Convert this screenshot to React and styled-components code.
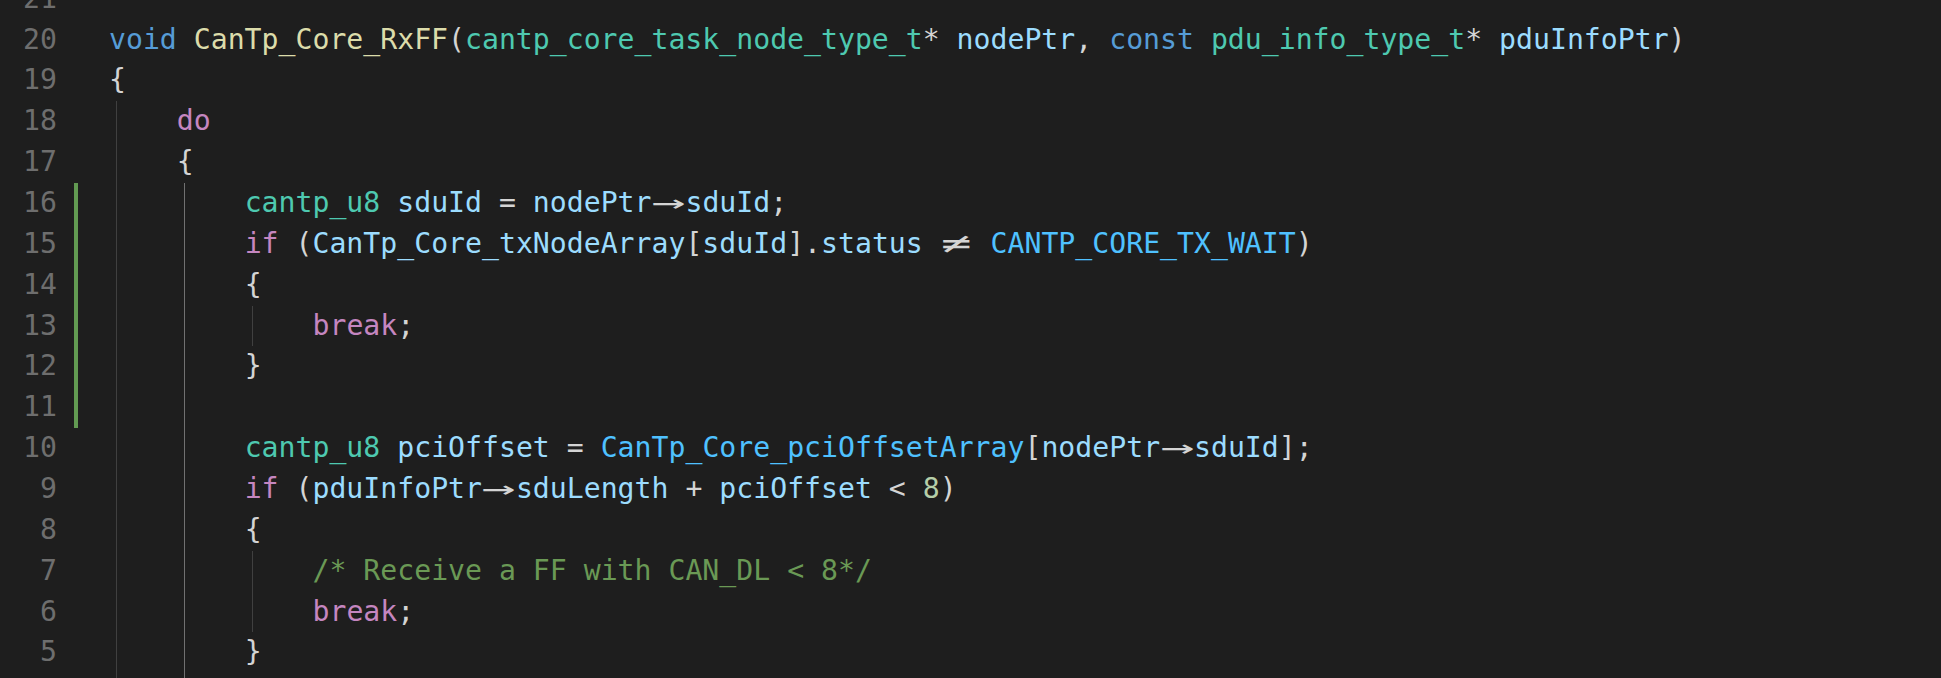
import React from "react";
import styled, { createGlobalStyle } from "styled-components";

const CW = 16.96; // character advance
const LH = 40.86; // line height

const Global = createGlobalStyle`
  html, body { margin: 0; padding: 0; background: #1e1e1e; }
  body { overflow: hidden; }
`;

const Editor = styled.div`
  width: 100vw;
  height: 100vh;
  overflow: hidden;
  background: #1e1e1e;
  font-family: "DejaVu Sans Mono", "Liberation Mono", monospace;
  font-size: 28.17px;
  color: #d4d4d4;
`;

const Lines = styled.div`
  margin-top: -21.3px;
  display: flex;
  flex-direction: column;
`;

const Line = styled.div`
  display: flex;
  height: ${LH}px;
  line-height: ${LH}px;
  white-space: pre;
`;

const LineNo = styled.div`
  width: 57px;
  flex: none;
  text-align: right;
  color: #6e6e6e;
`;

const Gutter = styled.div`
  width: 52px;
  flex: none;
  display: flex;
`;

const GitBar = styled.div`
  margin-left: 17px;
  width: 4px;
  background: ${(p) => (p.$on ? "#629a52" : "transparent")};
`;

const Code = styled.div`
  display: flex;
  flex: 1;
`;

const Indent = styled.div`
  flex: none;
  margin-left: 7px;
  width: ${4 * CW - 8}px;
  border-left: 1px solid ${(p) => (p.$active ? "#717171" : "#404040")};
`;

const Text = styled.span`
  white-space: pre;
`;

const palette = {
  kw: "#569cd6",
  ctrl: "#c586c0",
  fn: "#dcdcaa",
  type: "#4ec9b0",
  var: "#9cdcfe",
  glob: "#4fc1ff",
  num: "#b5cea8",
  com: "#6a9955",
  p: "#d4d4d4",
};

const Tok = styled.span`
  color: ${(p) => palette[p.$k] || palette.p};
`;

const Lig = styled.span`
  display: inline-block;
  width: ${2 * CW}px;
  text-align: center;
  color: #d4d4d4;
`;

const LigGlyph = styled.span`
  display: inline-block;
  transform: scaleX(${(p) => p.$sx});
`;

const arrow = (
  <Lig>
    <LigGlyph $sx={2}>→</LigGlyph>
  </Lig>
);
const neq = (
  <Lig>
    <LigGlyph $sx={1.8}>≠</LigGlyph>
  </Lig>
);

const T = (k, s) => <Tok $k={k}>{s}</Tok>;

const lines = [
  { n: 21, lvl: 0, c: null },
  {
    n: 20,
    lvl: 0,
    c: (
      <>
        {T("kw", "void")} {T("fn", "CanTp_Core_RxFF")}({T("type", "cantp_core_task_node_type_t")}* {T("var", "nodePtr")}, {T("kw", "const")} {T("type", "pdu_info_type_t")}* {T("var", "pduInfoPtr")})
      </>
    ),
  },
  { n: 19, lvl: 0, c: "{" },
  { n: 18, lvl: 1, c: T("ctrl", "do") },
  { n: 17, lvl: 1, c: "{" },
  {
    n: 16,
    lvl: 2,
    git: true,
    c: (
      <>
        {T("type", "cantp_u8")} {T("var", "sduId")} = {T("var", "nodePtr")}
        {arrow}
        {T("var", "sduId")};
      </>
    ),
  },
  {
    n: 15,
    lvl: 2,
    git: true,
    c: (
      <>
        {T("ctrl", "if")} ({T("var", "CanTp_Core_txNodeArray")}[{T("var", "sduId")}].{T("var", "status")} {neq} {T("glob", "CANTP_CORE_TX_WAIT")})
      </>
    ),
  },
  { n: 14, lvl: 2, git: true, c: "{" },
  { n: 13, lvl: 3, git: true, c: <>{T("ctrl", "break")};</> },
  { n: 12, lvl: 2, git: true, c: "}" },
  { n: 11, lvl: 2, git: true, c: null },
  {
    n: 10,
    lvl: 2,
    c: (
      <>
        {T("type", "cantp_u8")} {T("var", "pciOffset")} = {T("glob", "CanTp_Core_pciOffsetArray")}[{T("var", "nodePtr")}
        {arrow}
        {T("var", "sduId")}];
      </>
    ),
  },
  {
    n: 9,
    lvl: 2,
    c: (
      <>
        {T("ctrl", "if")} ({T("var", "pduInfoPtr")}
        {arrow}
        {T("var", "sduLength")} + {T("var", "pciOffset")} &lt; {T("num", "8")})
      </>
    ),
  },
  { n: 8, lvl: 2, c: "{" },
  { n: 7, lvl: 3, c: T("com", "/* Receive a FF with CAN_DL < 8*/") },
  { n: 6, lvl: 3, c: <>{T("ctrl", "break")};</> },
  { n: 5, lvl: 2, c: "}" },
  { n: 4, lvl: 2, c: null },
];

export default function App() {
  return (
    <>
      <Global />
      <Editor>
        <Lines>
          {lines.map((l) => (
            <Line key={l.n}>
              <LineNo>{l.n}</LineNo>
              <Gutter>
                <GitBar $on={!!l.git} />
              </Gutter>
              <Code>
                {Array.from({ length: l.lvl }).map((_, i) => (
                  <Indent key={i} $active={i === 1} />
                ))}
                {l.c !== null && <Text>{l.c}</Text>}
              </Code>
            </Line>
          ))}
        </Lines>
      </Editor>
    </>
  );
}
